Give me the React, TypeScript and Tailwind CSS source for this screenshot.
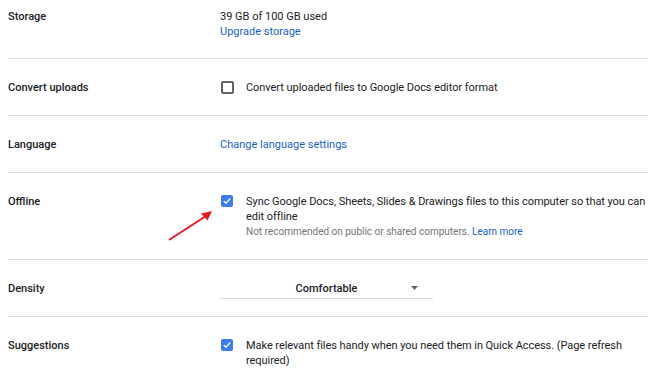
import React from 'react';

const Checkbox: React.FC<{ checked?: boolean }> = ({ checked }) =>
  checked ? (
    <div className="mt-[1px] flex h-[12px] w-[12px] shrink-0 items-center justify-center rounded-[2px] bg-[#3b7ded]">
      <svg viewBox="0 0 12 12" className="h-[10px] w-[10px]">
        <path d="M2.2 6.2 L4.8 8.6 L9.8 3.4" fill="none" stroke="white" strokeWidth="1.6" />
      </svg>
    </div>
  ) : (
    <div className="mt-[1px] h-[13px] w-[13px] shrink-0 rounded-[2px] border-2 border-[#5f6368]" />
  );

const Row: React.FC<{ label: string; className?: string; children: React.ReactNode }> = ({
  label,
  className = 'pt-[21px] pb-[20px]',
  children,
}) => (
  <div className={`flex border-b border-[#e0e0e0] ${className}`}>
    <div className="w-[212px] shrink-0 font-medium text-[#202124]">{label}</div>
    <div className="min-w-0 flex-1">{children}</div>
  </div>
);

export default function App() {
  return (
    <div
      className="relative h-[376px] w-[670px] overflow-hidden bg-white text-[11px] leading-[15px] text-[#202124]"
      style={{ fontFamily: 'Roboto, "Liberation Sans", sans-serif' }}
    >
      <div className="ml-2 w-[640px]">
        <Row label="Storage" className="pt-[9px] pb-[19px]">
          <div>39 GB of 100 GB used</div>
          <div className="text-[#1a5fc9]">Upgrade storage</div>
        </Row>

        <Row label="Convert uploads">
          <div className="flex gap-[12px] pl-[1px]">
            <Checkbox />
            <span className="tracking-[-0.05px]">Convert uploaded files to Google Docs editor format</span>
          </div>
        </Row>

        <Row label="Language">
          <div className="text-[#1a5fc9]">Change language settings</div>
        </Row>

        <Row label="Offline">
          <div className="flex gap-[13px] pl-[1px]">
            <Checkbox checked />
            <div className="whitespace-nowrap tracking-[-0.05px]">
              <div>
                Sync Google Docs, Sheets, Slides &amp; Drawings files to this computer so that you can
                <br />
                edit offline
              </div>
              <div className="text-[10px] tracking-normal text-[#70757a]">
                Not recommended on public or shared computers.{' '}
                <span className="text-[#1a5fc9]">Learn more</span>
              </div>
            </div>
          </div>
        </Row>

        <Row label="Density">
          <div className="relative -mb-[3px] flex w-[213px] justify-center border-b border-[#dadce0] pb-[2px]">
            <span className="font-medium">Comfortable</span>
            <svg viewBox="0 0 7 4" className="absolute right-[15px] top-[5px] h-[4px] w-[7px]">
              <path d="M0 0 L7 0 L3.5 4 Z" fill="#5f6368" />
            </svg>
          </div>
        </Row>

        <Row label="Suggestions">
          <div className="flex gap-[13px] pl-[1px]">
            <Checkbox checked />
            <span className="whitespace-nowrap tracking-[-0.05px]">
              Make relevant files handy when you need them in Quick Access. (Page refresh
              <br />
              required)
            </span>
          </div>
        </Row>
      </div>

      <svg className="absolute left-[165px] top-[205px] h-[40px] w-[52px]" viewBox="0 0 52 40">
        <path d="M4 35 L44 9" stroke="#e31b23" strokeWidth="2" fill="none" />
        <path d="M47 6 L36 8.5 L42.5 15.5 Z" fill="#e31b23" />
      </svg>
    </div>
  );
}
